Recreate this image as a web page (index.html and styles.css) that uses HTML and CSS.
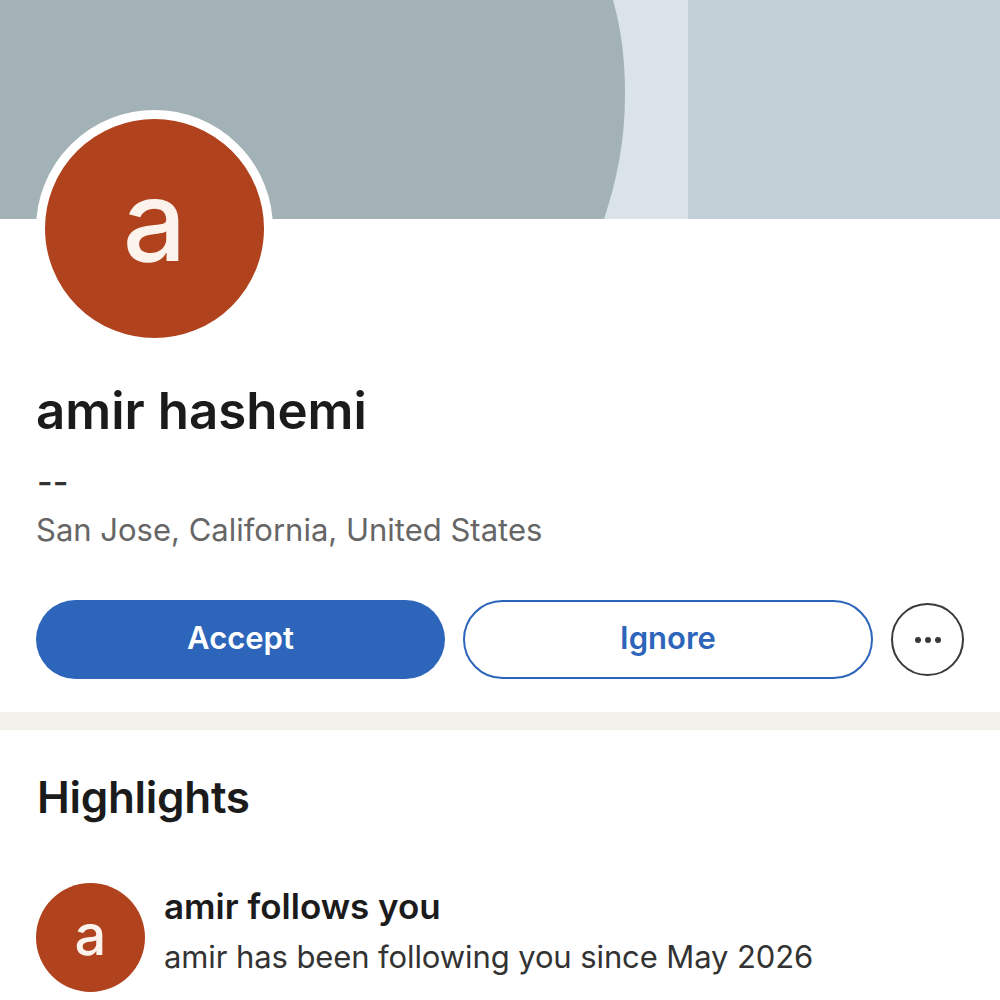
FILE: index.html
```html
<!DOCTYPE html>
<html lang="en">
  <head>
    <meta charset="UTF-8" />
    <title>amir hashemi</title>
    <link rel="stylesheet" href="styles.css">
  </head>
  <body>
    <!-- Cover -->
    <svg class="cover" viewBox="0 0 1000 219" aria-hidden="true">
      <rect width="1000" height="219" fill="#c0d0d6" />
      <rect width="688" height="219" fill="#d9e3e8" />
      <path d="M0 0H613C622 32 625 62 625 95C625 140 617 180 604 219H0Z" fill="#a3b2b6" />
    </svg>

    <!-- Profile -->
    <div class="profile">
      <div class="photo">a</div>
      <h1 class="name">amir hashemi</h1>
      <p class="headline">--</p>
      <p class="location">San Jose, California, United States</p>
      <div class="actions">
        <button class="btn btn-accept">Accept</button>
        <button class="btn btn-ignore">Ignore</button>
        <button class="btn-more" aria-label="More">
          <svg width="30" height="8" viewBox="0 0 30 8" fill="#3a3a3a">
            <circle cx="5" cy="4" r="3" />
            <circle cx="15" cy="4" r="3" />
            <circle cx="25" cy="4" r="3" />
          </svg>
        </button>
      </div>
    </div>

    <div class="divider"></div>

    <!-- Highlights -->
    <div class="highlights">
      <h2 class="section-title">Highlights</h2>
      <div class="highlight">
        <div class="photo-small">a</div>
        <div class="highlight-text">
          <div class="highlight-title">amir follows you</div>
          <div class="highlight-sub">amir has been following you since May 2026</div>
        </div>
      </div>
    </div>
  </body>
</html>
```

FILE: styles.css
```css
html,
body {
  height: 1000px;
  overflow: hidden;
}

body {
  font-family: Inter, "Liberation Sans", sans-serif;
  background-color: #fff;
  color: #1b1b1b;
  margin: 0;
  padding: 0;
}

.cover {
  display: block;
  width: 1000px;
  height: 219px;
}

.profile {
  display: flow-root;
  padding: 0 36px;
  height: 493px;
  box-sizing: border-box;
}

.photo {
  width: 219px;
  height: 219px;
  margin-top: -109px;
  border: 9px solid #fff;
  border-radius: 50%;
  background-color: #b0421d;
  color: #fbf3ec;
  font-size: 112px;
  font-weight: 500;
  line-height: 203px;
  text-align: center;
  position: relative;
}

.name {
  margin: 34px 0 0;
  font-size: 51px;
  line-height: 60px;
  font-weight: 600;
}

.headline {
  margin: 22px 0 0 1px;
  font-size: 34px;
  font-weight: 500;
  line-height: 38px;
  color: #333;
}

.location {
  margin: 10px 0 0;
  font-size: 31px;
  line-height: 38px;
  color: #666;
}

.actions {
  display: flex;
  align-items: center;
  gap: 18px;
  margin-top: 51px;
}

.btn {
  width: 409px;
  height: 79px;
  box-sizing: border-box;
  padding: 0 0 4px;
  border-radius: 40px;
  font-family: inherit;
  font-size: 31px;
  font-weight: 600;
}

.btn-accept {
  background-color: #2d65ba;
  border: none;
  color: #fff;
}

.btn-ignore {
  width: 410px;
  background-color: #fff;
  border: 2px solid #2d65ba;
  color: #2d65ba;
}

.btn-more {
  width: 73px;
  height: 73px;
  box-sizing: border-box;
  padding: 0;
  border: 2px solid #3a3a3a;
  border-radius: 50%;
  background-color: #fff;
  display: flex;
  align-items: center;
  justify-content: center;
}

.divider {
  height: 18px;
  background-color: #f3f0eb;
}

.highlights {
  padding: 39px 36px 0;
}

.section-title {
  margin: 0 0 0 1px;
  font-size: 44px;
  line-height: 56px;
  font-weight: 600;
  letter-spacing: -0.3px;
}

.highlight {
  display: flex;
  gap: 19px;
  margin-top: 58px;
}

.photo-small {
  width: 109px;
  height: 109px;
  flex-shrink: 0;
  border-radius: 50%;
  background-color: #b0421d;
  color: #fbf3ec;
  font-size: 56px;
  font-weight: 500;
  line-height: 105px;
  text-align: center;
}

.highlight-title {
  margin-top: -1px;
  font-size: 35px;
  line-height: 48px;
  font-weight: 600;
}

.highlight-sub {
  margin-top: 3px;
  font-size: 31px;
  line-height: 48px;
  letter-spacing: -0.1px;
  color: #333;
}
```
